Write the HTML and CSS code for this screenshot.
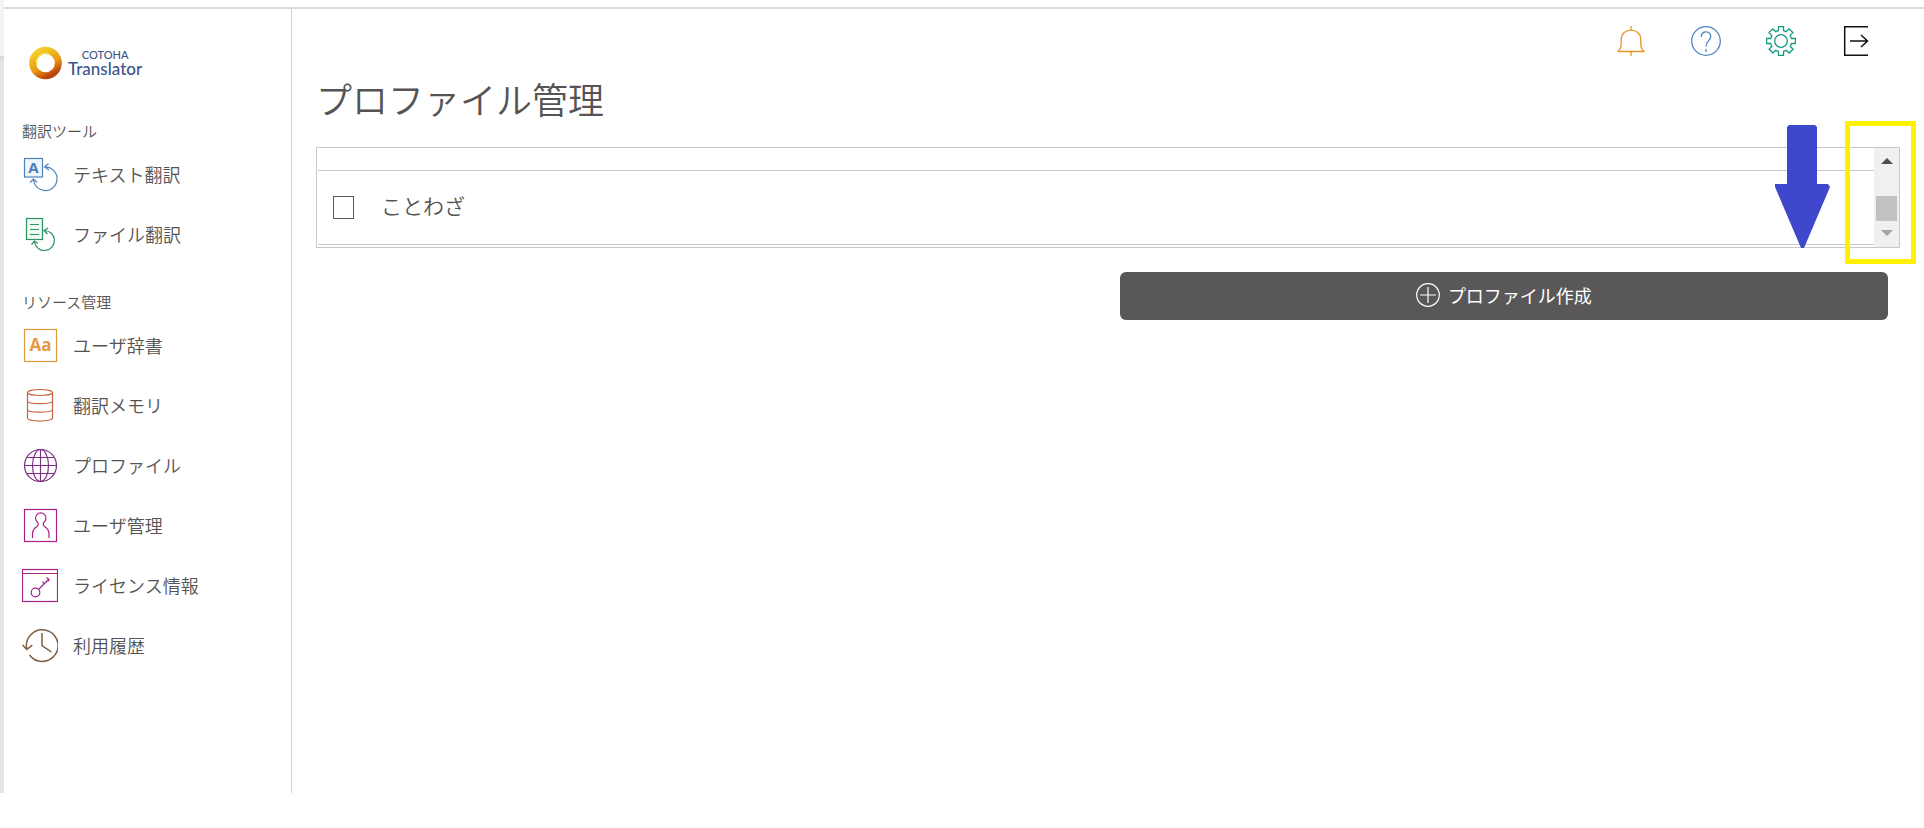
FILE: index.html
```
<!DOCTYPE html>
<html lang="ja">
<head>
    <meta charset="UTF-8">
    <meta name="viewport" content="width=device-width, initial-scale=1.0">
    <title>プロファイル管理 - COTOHA Translator</title>
    <link rel="stylesheet" href="styles.css">
</head>
<body>
    <div class="edge"></div>
    <div class="app">
        <nav class="sidebar">
            <a class="logo" href="#">
                <svg width="34" height="34" viewBox="0 0 34 34">
                    <defs>
                        <linearGradient id="ring" x1="0.2" y1="0" x2="0.7" y2="1">
                            <stop offset="0" stop-color="#f3cf2c"/>
                            <stop offset="0.6" stop-color="#e99a12"/>
                            <stop offset="1" stop-color="#b8400c"/>
                        </linearGradient>
                    </defs>
                    <circle cx="16.500" cy="17" r="12.800" fill="none" stroke="url(#ring)" stroke-width="7"/>
                    <path d="M8 19a9 9 0 0 1 12-11" fill="none" stroke="#f8e04a" stroke-width="1.5"/>
                </svg>
                <span class="logo-text">
                    <span class="logo-top">COTOHA</span>
                    <span class="logo-bottom">Translator</span>
                </span>
            </a>

            <h2>翻訳ツール</h2>
            <ul class="menu">
                <li><a href="#">
                    <svg class="icon blue" viewBox="0 0 36 36">
                        <rect x="2.5" y="2.5" width="18" height="18.5" fill="#eef6fd"/>
                        <text x="11.5" y="17" text-anchor="middle" class="letter-a">A</text>
                        <path d="M22.5 11A11.800 11.800 0 1 1 11.5 23.5M26.5 7.5L22.5 11l4.500 3M8 26.500L11.500 23l3.500 3.500"/>
                    </svg>
                    テキスト翻訳</a></li>
                <li><a href="#">
                    <svg class="icon green" viewBox="0 0 36 36">
                        <rect x="4.500" y="2.500" width="16" height="21" fill="#eefaf3"/>
                        <path d="M8 8.500h9M8 13.500h9M8 18.500h9"/>
                        <path d="M22 14.500A10 10 0 1 1 12.500 26M26 12l-4 2.500 3.500 3.500M9.500 28.500l3-3.500 3.500 2.500"/>
                    </svg>
                    ファイル翻訳</a></li>
            </ul>

            <h2>リソース管理</h2>
            <ul class="menu">
                <li><a href="#">
                    <svg class="icon orange" viewBox="0 0 36 36">
                        <rect x="2.500" y="2.500" width="32" height="32"/>
                        <text x="18.500" y="24" text-anchor="middle" class="letter-aa">Aa</text>
                    </svg>
                    ユーザ辞書</a></li>
                <li><a href="#">
                    <svg class="icon rust" viewBox="0 0 36 36">
                        <ellipse cx="18" cy="5.500" rx="12.500" ry="3"/>
                        <path d="M5.500 5.500V31c0 4 25 4 25 0V5.500M5.500 14c0 3.500 25 3.500 25 0M5.500 22.500c0 3.500 25 3.500 25 0"/>
                    </svg>
                    翻訳メモリ</a></li>
                <li><a href="#">
                    <svg class="icon purple" viewBox="0 0 36 36">
                        <circle cx="18.500" cy="18.500" r="16"/>
                        <ellipse cx="18.500" cy="18.500" rx="8" ry="16"/>
                        <path d="M18.500 2.500v32M2.500 18.500h32M5 10.500h27M5 26.500h27"/>
                    </svg>
                    プロファイル</a></li>
                <li><a href="#">
                    <svg class="icon magenta" viewBox="0 0 36 36">
                        <rect x="2.500" y="2.500" width="32" height="32"/>
                        <path d="M10.500 31v-4c0-4 2-6 4.500-7.500 1.500-1 1.500-3 .5-4.300a5.200 5.200 0 1 1 6.500 0c-1 1.300-1 3.300.5 4.300 2.500 1.500 4.500 3.500 4.500 7.500v4"/>
                    </svg>
                    ユーザ管理</a></li>
                <li><a href="#">
                    <svg class="icon magenta" viewBox="0 0 36 36">
                        <rect x=".5" y="2.500" width="35" height="32"/>
                        <path d="M.5 6.500h35"/>
                        <circle cx="13.500" cy="25.500" r="4.300"/>
                        <path d="M16.500 22.500L26.500 12.500M24.500 10.500l2.500 2-1 2M20.500 14.500l2 3"/>
                    </svg>
                    ライセンス情報</a></li>
                <li><a href="#">
                    <svg class="icon brown" viewBox="0 0 36 36">
                        <path d="M4.800 22A15.800 15.800 0 1 1 7.500 28M.5 18l4.300 4.500 5.500-4.500M20 6v12.500l9.500 6.500"/>
                    </svg>
                    利用履歴</a></li>
            </ul>
        </nav>

        <main class="main">
            <div class="toolbar">
                <button type="button" aria-label="お知らせ">
                    <svg class="tool bell" viewBox="0 0 30 30">
                        <path d="M15 0v4M15 25.500V30M1.500 25.500h27M1.500 25.500c3-2 3.700-4 3.700-7.500v-4.500c0-12.500 19.600-12.500 19.600 0V18c0 3.500.7 5.500 3.700 7.500"/>
                    </svg>
                </button>
                <button type="button" aria-label="ヘルプ">
                    <svg class="tool help" viewBox="0 0 30 30">
                        <circle cx="15" cy="15" r="14.300"/>
                        <path d="M10.300 11c0-7 9.400-6.500 9.400-.5 0 4-4.700 4.500-4.700 10M15 23v3"/>
                    </svg>
                </button>
                <button type="button" aria-label="設定">
                    <svg class="tool gear" viewBox="0 0 30 30">
                        <circle cx="15" cy="15" r="6.300"/>
                        <path d="M12.500.6h5v4l2.600 1.100 2.900-2.800 3.900 3.700-2.700 3L25.500 12.500h4v5h-4l-1.200 2.800 2.700 2.900-3.800 3.800-3.100-2.700-2.600 1.100v4h-5v-4l-2.700-1.100-2.900 2.700-3.800-3.800 2.700-2.900-1.200-2.800h-4v-5h4l1.200-2.900-2.800-3L6.800 2.900l3.100 2.800 2.600-1.100z"/>
                    </svg>
                </button>
                <button type="button" aria-label="ログアウト">
                    <svg class="tool exit" viewBox="0 0 30 30">
                        <path d="M27 .7H3.700v28.600H27M9 15h17M20 9l6.500 6-6.500 6"/>
                    </svg>
                </button>
            </div>

            <h1>プロファイル管理</h1>

            <div class="panel">
                <ul class="list">
                    <li class="row-rest"></li>
                    <li class="row">
                        <input type="checkbox" id="profile1">
                        <label for="profile1">ことわざ</label>
                    </li>
                </ul>
                <div class="scrollbar">
                    <div class="arrow-up"></div>
                    <div class="thumb"></div>
                    <div class="arrow-down"></div>
                </div>
                <div class="mark"></div>
                <svg class="pointer" viewBox="0 0 55 123">
                    <path d="M14 0h26l2 2v57h11l2 3L29 123h-3L0 62v-3h12V2z"/>
                </svg>
            </div>

            <button type="button" class="create">
                <svg viewBox="0 0 24 24">
                    <circle cx="12" cy="12" r="11.300"/>
                    <path d="M12 4v16M4 12h16"/>
                </svg>
                プロファイル作成
            </button>
        </main>
    </div>
</body>
</html>
```

FILE: styles.css
```
* {
    box-sizing: border-box;
}

body {
    margin: 0;
    padding-bottom: 35px;
    min-height: 100vh;
    display: flex;
    background: #fff;
    color: #555353;
    font-family: "Noto Sans CJK JP", sans-serif;
    font-weight: 350;
}

ul {
    list-style: none;
    margin: 0;
    padding: 0;
}

button {
    font-family: inherit;
    border: none;
    cursor: pointer;
}

.edge {
    width: 4px;
    background: linear-gradient(#f4f3f2 56px, #d6d6d6 56px, #e5e5e5 62px);
}

.app {
    flex: 1;
    display: flex;
    margin-top: 7px;
    border-top: 2px solid #dadbdd;
}

/* sidebar */
.sidebar {
    width: 288px;
    padding: 37px 18px 0;
    border-right: 1px solid #d3d3d5;
}

.logo {
    display: flex;
    gap: 5px;
    margin: 0 0 13px 7px;
    text-decoration: none;
    color: #3d5488;
}

.logo-text {
    display: flex;
    flex-direction: column;
    align-items: center;
    padding-top: 2px;
    font-family: Lato, sans-serif;
    font-weight: 500;
    line-height: 14px;
}

.logo-top {
    font-size: 11px;
}

.logo-bottom {
    font-size: 17px;
}

.sidebar h2 {
    margin: 0;
    padding: 28px 0 3px;
    font-size: 15px;
    line-height: 20px;
    font-weight: 350;
}

.menu a {
    display: flex;
    align-items: center;
    gap: 15px;
    height: 60px;
    font-size: 18px;
    color: #555353;
    text-decoration: none;
}

.icon {
    width: 36px;
    height: 36px;
    fill: none;
    stroke-width: 1.2;
}

.icon text {
    stroke: none;
    font-family: "Open Sans", sans-serif;
    font-weight: 700;
}

.letter-a {
    font-size: 15px;
    fill: #4a7db5;
}

.letter-aa {
    font-size: 17px;
    fill: #e49b3f;
}

.blue { stroke: #4f84b9; }
.green { stroke: #2f9161; }
.orange { stroke: #dc9a38; }
.rust { stroke: #c4633f; }
.purple { stroke: #7d2f82; }
.magenta { stroke: #a62287; }
.brown { stroke: #7f5b3e; stroke-width: 1.5; }

/* main area */
.main {
    flex: 1;
    padding: 17px 24px 0;
}

.toolbar {
    display: flex;
    justify-content: flex-end;
    gap: 45px;
    padding-right: 29px;
}

.toolbar button {
    padding: 0;
    background: none;
}

.tool {
    display: block;
    width: 30px;
    height: 30px;
    fill: none;
    stroke-width: 1.3;
}

.bell { stroke: #e8962c; }
.help { stroke: #4d84c6; }
.gear { stroke: #149a83; }
.exit { stroke: #111; stroke-width: 1.5; }

h1 {
    margin: 18px 0 25px;
    font-size: 36px;
    line-height: 48px;
    font-weight: 350;
}

.panel {
    position: relative;
    display: flex;
    padding-left: 1px;
    border: 1px solid #c8c8ca;
}

.list {
    flex: 1;
    padding-bottom: 2px;
}

.row-rest {
    height: 23px;
    border-bottom: 1px solid #c8c8ca;
}

.row {
    display: flex;
    align-items: center;
    gap: 27px;
    height: 74px;
    padding-left: 15px;
    border-bottom: 1px solid #c8c8ca;
    font-size: 21px;
}

.row label {
    padding-bottom: 6px;
}

.row input {
    appearance: none;
    width: 21px;
    height: 23px;
    margin: 0;
    background: #fff;
    border: 1px solid #5a5a5a;
}

.scrollbar {
    display: flex;
    flex-direction: column;
    align-items: center;
    width: 25px;
    padding: 10px 0;
    background: #f0f0f0;
}

.arrow-up,
.arrow-down {
    border: 6px solid transparent;
}

.arrow-up {
    border-top: none;
    border-bottom-color: #505050;
}

.arrow-down {
    margin-top: 9px;
    border-bottom: none;
    border-top-color: #a3a3a3;
}

.thumb {
    width: 21px;
    height: 25px;
    margin-top: 32px;
    background: #c1c1c1;
}

.mark {
    position: absolute;
    top: -27px;
    right: -17px;
    width: 71px;
    height: 143px;
    border: 5px solid #fff200;
}

.pointer {
    position: absolute;
    top: -23px;
    right: 69px;
    width: 55px;
    height: 123px;
    fill: #3f48cc;
}

.create {
    display: flex;
    align-items: center;
    justify-content: center;
    gap: 8px;
    width: 48.5%;
    height: 48px;
    margin: 24px 12px 0 auto;
    padding: 0 0 2px;
    background: #595757;
    border-radius: 6px;
    color: #fff;
    font-size: 18px;
}

.create svg {
    width: 24px;
    height: 24px;
    fill: none;
    stroke: #fff;
    stroke-width: 1.2;
}
```
